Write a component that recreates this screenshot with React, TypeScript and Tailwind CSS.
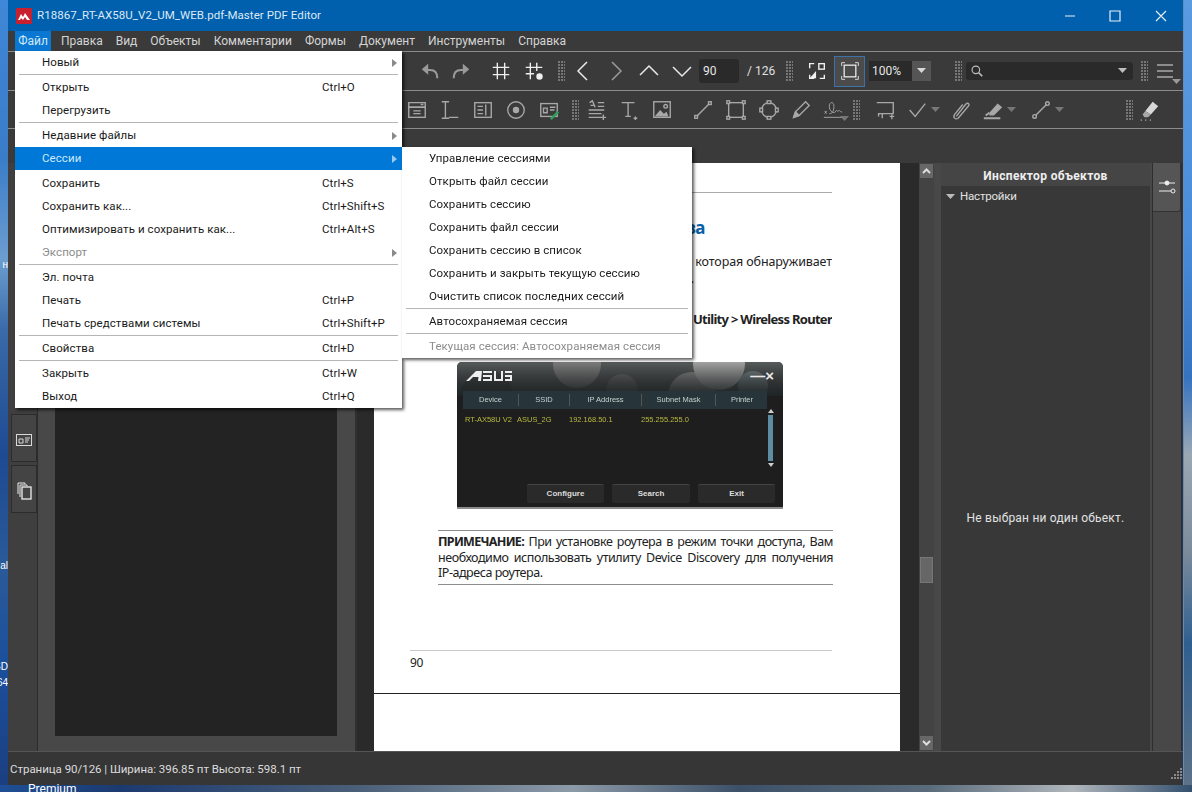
const ui = "font-['Roboto','Noto_Sans',sans-serif]"

type Item = { t?: string; k?: string; sub?: boolean; off?: boolean; on?: boolean; sep?: boolean }

const fileMenu: Item[] = [
  { t: 'Новый', sub: true },
  { sep: true },
  { t: 'Открыть', k: 'Ctrl+O' },
  { t: 'Перегрузить' },
  { sep: true },
  { t: 'Недавние файлы', sub: true },
  { t: 'Сессии', sub: true, on: true },
  { sep: true, off: true },
  { t: 'Сохранить', k: 'Ctrl+S' },
  { t: 'Сохранить как...', k: 'Ctrl+Shift+S' },
  { t: 'Оптимизировать и сохранить как...', k: 'Ctrl+Alt+S' },
  { t: 'Экспорт', sub: true, off: true },
  { sep: true },
  { t: 'Эл. почта' },
  { t: 'Печать', k: 'Ctrl+P' },
  { t: 'Печать средствами системы', k: 'Ctrl+Shift+P' },
  { sep: true },
  { t: 'Свойства', k: 'Ctrl+D' },
  { sep: true },
  { t: 'Закрыть', k: 'Ctrl+W' },
  { t: 'Выход', k: 'Ctrl+Q' },
]

const sessionMenu: Item[] = [
  { t: 'Управление сессиями' },
  { t: 'Открыть файл сессии' },
  { t: 'Сохранить сессию' },
  { t: 'Сохранить файл сессии' },
  { t: 'Сохранить сессию в список' },
  { t: 'Сохранить и закрыть текущую сессию' },
  { t: 'Очистить список последних сессий' },
  { sep: true },
  { t: 'Автосохраняемая сессия' },
  { sep: true },
  { t: 'Текущая сессия: Автосохраняемая сессия', off: true },
]

const menus = ['Правка', 'Вид', 'Объекты', 'Комментарии', 'Формы', 'Документ', 'Инструменты', 'Справка']

// small svg wrapper, everything is drawn on a 24 grid
const Ic = ({ c = '', s = 24, children }: { c?: string; s?: number; children: React.ReactNode }) => (
  <svg width={s} height={s} viewBox="0 0 24 24" fill="none" stroke="currentColor" strokeWidth="1.5" className={`shrink-0 ${c}`}>
    {children}
  </svg>
)

const Grip = ({ c = '' }: { c?: string }) => (
  <svg width="7" height="20" viewBox="0 0 7 20" className={`shrink-0 ${c}`} fill="#777">
    {[0, 3, 6, 9, 12, 15, 18].map((y) => (
      <g key={y}>
        <rect x="0" y={y} width="2" height="2" />
        <rect x="3" y={y} width="2" height="2" />
        <rect x="6" y={y} width="1" height="2" />
      </g>
    ))}
  </svg>
)

const Caret = ({ c = '' }: { c?: string }) => (
  <svg width="9" height="6" viewBox="0 0 9 6" className={`shrink-0 ${c}`} fill="currentColor">
    <path d="M0 0h9L4.5 5z" />
  </svg>
)

const Menu = ({ items, arrow }: { items: Item[]; arrow?: boolean }) => (
  <div className={`${ui} text-[11.500px] tracking-[0.08px]`}>
    {items.map((m, i) =>
      m.sep ? (
        <div key={i} className="h-[2px] px-1">
          {!m.off && <div className="h-px bg-[#b5b5b5]" />}
        </div>
      ) : (
        <div
          key={i}
          className={`h-[23px] flex items-center pl-[27px] ${
            m.on ? 'bg-[#0078d7] text-[#cfe8fb]' : m.off ? 'text-[#8c8c8c]' : 'text-[#1a1a1a]'
          }`}
        >
          <span className={arrow ? 'w-[280px] shrink-0' : ''}>{m.t}</span>
          {arrow && <span className="w-[72px] shrink-0 whitespace-nowrap">{m.k}</span>}
          {m.sub && (
            <svg width="5" height="8" viewBox="0 0 5 8" className={`-ml-[2px] ${m.on ? 'text-[#9cc9ee]' : 'text-[#8a8a8a]'}`} fill="currentColor">
              <path d="M0 0l5 4-5 4z" />
            </svg>
          )}
        </div>
      ),
    )}
  </div>
)

const Toolbar1 = () => (
  <div className="h-[39px] flex items-center border-t border-[#8c8c8c] text-[#9a9a9a] pl-[403px] shrink-0">
    <Ic c="ml-[8px]" s={22}><path d="M20 20c0-6-3-9-8-9H8" strokeWidth="2.200" /><path d="M3 10l7-6v12z" fill="currentColor" stroke="none" /></Ic>
    <Ic c="ml-[9px]" s={22}><path d="M4 20c0-6 3-9 8-9h4" strokeWidth="2.200" /><path d="M21 10l-7-6v12z" fill="currentColor" stroke="none" /></Ic>
    <Ic c="ml-[18px] text-[#f0f0f0]" s={22}><path d="M8 3v18M16 3v18M3 8h18M3 16h18" /></Ic>
    <Ic c="ml-[11px] text-[#f0f0f0]" s={22}>
      <path d="M8 3v18M15 3v9M3 8h18M3 15h9" />
      <circle cx="18" cy="18" r="3.500" fill="#f0f0f0" stroke="none" />
    </Ic>
    <Grip c="ml-[13px]" />
    <Ic c="ml-[6px] text-[#e8e8e8]" s={24}><path d="M16 3L7 12l9 9" /></Ic>
    <Ic c="ml-[9px]" s={24}><path d="M8 3l9 9-9 9" /></Ic>
    <Ic c="ml-[9px] text-[#e8e8e8]" s={24}><path d="M3 16l9-9 9 9" /></Ic>
    <Ic c="ml-[9px] text-[#e8e8e8]" s={24}><path d="M3 8l9 9 9-9" /></Ic>
    <div className={`ml-[5px] w-[40px] h-[24px] rounded-[3px] bg-[#2a2a2a] text-[#e6e6e6] text-[12px] flex items-center pl-[4px] ${ui}`}>90</div>
    <span className={`ml-[8px] w-[30px] text-[12px] text-[#e0e0e0] ${ui}`}>/ 126</span>
    <Grip c="ml-[9px]" />
    <Ic c="ml-[13px] text-[#f0f0f0]" s={22}>
      <path d="M9 4H4v5M4 16v4h5M15 20h5v-4" />
      <rect x="14" y="4" width="6" height="6" />
      <path d="M11 12L4 20h7z" fill="#f0f0f0" stroke="none" />
    </Ic>
    <div className="ml-[6px] w-[31px] h-[31px] bg-[#4b4b4b] border border-[#3d72a8] flex items-center justify-center text-[#f0f0f0]">
      <Ic s={20}>
        <rect x="5" y="5" width="14" height="14" />
        <path d="M2 6V2h4M18 2h4v4M22 18v4h-4M6 22H2v-4" strokeWidth="1" />
      </Ic>
    </div>
    <div className={`ml-[4px] w-[43px] h-[20px] bg-[#2a2a2a] text-[#e6e6e6] text-[12px] flex items-center pl-[3px] ${ui}`}>100%</div>
    <div className="w-[19px] h-[20px] bg-[#555] flex items-center justify-center text-[#d8d8d8]"><Caret /></div>
    <Grip c="ml-[24px]" />
    <div className="ml-[4px] w-[167px] h-[18px] rounded-[3px] bg-[#2a2a2a] flex items-center justify-between pl-[4px] pr-[6px] text-[#bdbdbd]">
      <Ic s={14}><circle cx="10" cy="10" r="6.500" strokeWidth="2" /><path d="M15 15l6 6" strokeWidth="3" /></Ic>
      <Caret />
    </div>
    <Grip c="ml-[8px]" />
    <div className="ml-[9px] relative text-[#e0e0e0]">
      <svg width="16" height="14" viewBox="0 0 16 14" className="block" stroke="currentColor"><path d="M0 1h16M0 7h16M0 13h16" /></svg>
      <Caret c="absolute left-[15px] top-[15px] text-[#999]" />
    </div>
  </div>
)

const Toolbar2 = () => (
  <div className="h-[38px] flex items-center border-t border-[#8c8c8c] text-[#a8a8a8] pl-[398px] shrink-0">
    <Ic s={22}><rect x="3" y="9" width="18" height="11" /><path d="M3 4h18v5H3zM8 13h8M8 16h8M16 6h3" /></Ic>
    <Ic c="ml-[11px]" s={22}><path d="M3 3h8M7 3v18M3 21h8M11 20h10" /></Ic>
    <Ic c="ml-[11px]" s={22}><rect x="3" y="4" width="18" height="16" /><path d="M6 8h6M6 12h6M6 16h6M15 6v12" /></Ic>
    <Ic c="ml-[11px]" s={22}><circle cx="12" cy="12" r="9" /><circle cx="12" cy="12" r="3.500" fill="currentColor" stroke="none" /></Ic>
    <Ic c="ml-[11px]" s={22}>
      <rect x="3" y="5" width="18" height="14" />
      <path d="M6 10h4v5H6zM13 9h6M13 12h5" />
      <path d="M13 21l8-8 2 2-8 8z" fill="#2f9e5a" stroke="none" />
    </Ic>
    <Grip c="ml-[12px]" />
    <Ic c="ml-[6px]" s={22}><path d="M5 4l3-2 3 7M6 7h4M14 4h7M14 8h7M4 12h17M4 16h14M4 20h14M20 17v6M17 20h6" /></Ic>
    <Ic c="ml-[11px]" s={22}><path d="M4 4h14M11 4v15M8 19h6M19 19v4M17 21h4" /></Ic>
    <Ic c="ml-[11px]" s={22}>
      <rect x="3" y="3" width="18" height="17" />
      <path d="M4 19l6-7 4 4 3-2 2 5z" fill="currentColor" stroke="none" />
      <circle cx="16" cy="8" r="2" />
    </Ic>
    <Ic c="ml-[19px]" s={22}><path d="M6 18L18 6" /><rect x="3" y="18" width="3" height="3" /><rect x="18" y="3" width="3" height="3" /></Ic>
    <Ic c="ml-[11px]" s={22}>
      <rect x="4" y="4" width="16" height="16" />
      <rect x="2" y="2" width="3" height="3" fill="#3a3a3a" /><rect x="19" y="2" width="3" height="3" fill="#3a3a3a" />
      <rect x="2" y="19" width="3" height="3" fill="#3a3a3a" /><rect x="19" y="19" width="3" height="3" fill="#3a3a3a" />
    </Ic>
    <Ic c="ml-[11px]" s={22}>
      <circle cx="12" cy="12" r="8" />
      <rect x="10" y="2" width="4" height="3" fill="#3a3a3a" /><rect x="10" y="19" width="4" height="3" fill="#3a3a3a" />
      <rect x="2" y="10" width="3" height="4" fill="#3a3a3a" /><rect x="19" y="10" width="3" height="4" fill="#3a3a3a" />
    </Ic>
    <Ic c="ml-[10px]" s={22}><path d="M4 20l2-6L17 3l4 4-11 11z" /><path d="M4 20l2-6 4 4z" fill="currentColor" /></Ic>
    <Ic c="ml-[10px]" s={22}><path d="M2 20h20M3 13l2 3M5 13l-2 3M8 16c4 0 5-4 5-8 0-6-5-5-5 0 0 6 6 9 7 5 1-2 2 2 3 0s2 2 4 1" strokeWidth="1" /></Ic>
    <Caret c="-ml-[4px] mt-[18px] text-[#777]" />
    <Grip c="ml-[4px]" />
    <Ic c="ml-[14px]" s={22}><path d="M3 4h18v12H9v5M9 16H5v3M17 19h5M19.500 17v5" /></Ic>
    <Ic c="ml-[10px]" s={22}><path d="M4 12l6 7L21 5" /></Ic>
    <Caret c="ml-[3px] text-[#777]" />
    <Ic c="ml-[9px]" s={22}><path d="M8 19L18 6c3-3 5 0 3 2L10 21c-3 2-6-1-4-4L15 6" /></Ic>
    <Ic c="ml-[11px]" s={22}><path d="M8 15L17 5l5 4-9 9H8z" fill="currentColor" stroke="none" /><path d="M2 21h18M4 18l4-3" strokeWidth="2" /></Ic>
    <Caret c="ml-[3px] text-[#777]" />
    <Ic c="ml-[14px]" s={22}><path d="M6 18L18 6" /><circle cx="5" cy="19" r="2" /><circle cx="19" cy="5" r="2" /></Ic>
    <Caret c="ml-[3px] text-[#777]" />
    <Grip c="ml-[62px]" />
    <Ic c="ml-[5px]" s={22}><path d="M8 13L16 3l6 5-8 9z" fill="#d8d8d8" stroke="none" /><path d="M8 13l6 4-3 3H7l-2-3z" fill="currentColor" stroke="none" /><path d="M3 23h1M8 23h1M13 23h1" strokeWidth="2" /></Ic>
  </div>
)

const AsusShot = () => (
  <div className="ml-[83px] mt-[34px] relative w-[326px] h-[147px] shrink-0 overflow-hidden rounded-t-[5px] bg-[#1e1e1e] border-b-2 border-[#8c8c8c] font-['Liberation_Sans',sans-serif] text-[7.500px] text-[#c8c8c8] blur-[0.25px]">
    {/* bokeh behind the title of the little window */}
    <svg className="absolute left-0 top-0" width="326" height="34">
      <defs>
        <linearGradient id="fade" x1="0" y1="0" x2="0" y2="1">
          <stop offset="0" stopColor="#000" stopOpacity="0" />
          <stop offset="1" stopColor="#1c2224" stopOpacity="0.95" />
        </linearGradient>
      </defs>
      <rect width="326" height="34" fill="#565b5c" />
      <circle cx="120" cy="2" r="24" fill="#7c7c7c" />
      <circle cx="165" cy="28" r="16" fill="#6c6e6e" />
      <circle cx="235" cy="34" r="24" fill="#8a8a8a" />
      <circle cx="262" cy="2" r="26" fill="#a2a2a2" />
      <circle cx="296" cy="24" r="15" fill="#7a8588" />
      <circle cx="30" cy="34" r="26" fill="#4a4f50" />
      <rect width="326" height="34" fill="url(#fade)" />
    </svg>
    <div className="relative h-[27px] flex items-center justify-between px-[9px]">
      <svg width="46" height="10" viewBox="0 0 46 10" fill="#eee">
        <path d="M0 10L10 0h6l-1 10h-3l.5-4H7l-4 4zM17 0h9v2h-9zM17 4h9v6h-9V8h7V6h-7zM28 0h2v8h5V0h2v10h-9zM39 0h7v2h-7zM39 4h7v6h-7V8h5V6h-5z" />
      </svg>
      <span className="text-[15px] leading-none font-bold text-[#e8e8e8]">—×</span>
    </div>
    <div className="relative h-[18px] mt-[2px] ml-[6px] mr-[16px] grid grid-cols-[55px_51px_72px_74px_53px] items-center text-center bg-[#27353a] text-[#c8d0d0]">
      <span>Device</span>
      <span className="border-l border-[#555]">SSID</span>
      <span className="border-l border-[#555]">IP Address</span>
      <span className="border-l border-[#555]">Subnet Mask</span>
      <span className="border-l border-[#555]">Printer</span>
    </div>
    <div className="relative mt-[5px] ml-[8px] flex text-[#b9b840]">
      <span className="w-[52px]">RT-AX58U V2</span>
      <span className="w-[52px]">ASUS_2G</span>
      <span className="w-[72px]">192.168.50.1</span>
      <span>255.255.255.0</span>
    </div>
    <div className="absolute right-[9px] top-[47px] w-[7px] h-[58px] flex flex-col items-center text-[#cfcfcf]">
      <svg width="6" height="4" viewBox="0 0 6 4" fill="currentColor"><path d="M3 0l3 4H0z" /></svg>
      <div className="my-[2px] w-[5px] flex-1 bg-[#5e8ca0]" />
      <svg width="6" height="4" viewBox="0 0 6 4" fill="currentColor"><path d="M3 4L0 0h6z" /></svg>
    </div>
    <div className="absolute left-[70px] bottom-[4px] flex gap-[8px] text-[8px] font-bold text-[#ddd]">
      <div className="w-[77px] h-[19px] rounded-[2px] bg-[#2a2a2a] border-t border-[#444] flex items-center justify-center">Configure</div>
      <div className="w-[78px] h-[19px] rounded-[2px] bg-[#2a2a2a] border-t border-[#444] flex items-center justify-center">Search</div>
      <div className="w-[77px] h-[19px] rounded-[2px] bg-[#2a2a2a] border-t border-[#444] flex items-center justify-center">Exit</div>
    </div>
  </div>
)

const Page = () => (
  <div className="w-[526px] bg-white flex flex-col font-['Noto_Sans',sans-serif] text-[#222] shrink-0">
    <div className="ml-[36px] mr-[68px] mt-[29px] h-px bg-[#aaa] shrink-0" />
    <div className="ml-[36px] mr-[195px] mt-[25px] h-[20px] text-right text-[17px] leading-[20px] font-bold text-[#0b5fa5] tracking-[-0.5px] whitespace-nowrap">Обнаружение устройства</div>
    <div className="ml-[36px] mr-[68px] mt-[16px] h-[16px] text-right text-[12.500px] leading-[16px] tracking-[-0.1px] whitespace-nowrap overflow-hidden">утилита для ASUS WLAN роутеров, которая обнаруживает</div>
    <div className="ml-[36px] mr-[206px] mt-[1px] h-[16px] text-right text-[12.500px] leading-[16px] whitespace-nowrap">роутер.</div>
    <div className="ml-[36px] mr-[68px] mt-[23px] h-[18px] text-right text-[13px] leading-[18px] font-bold tracking-[-0.7px] whitespace-nowrap overflow-hidden">Device Discovery Utility &gt; Wireless Router</div>
    <AsusShot />
    <div className="ml-[64px] mr-[67px] mt-[21px] border-y border-[#8e8e8e] pt-[3px] pb-[3.500px] text-[12.500px] leading-[15.500px] tracking-[-0.45px] shrink-0">
      <p className="flex justify-between"><b className="font-bold tracking-[-0.7px]">ПРИМЕЧАНИЕ:</b><span>При</span><span>установке</span><span>роутера</span><span>в</span><span>режим</span><span>точки</span><span>доступа,</span><span>Вам</span></p>
      <p className="flex justify-between"><span>необходимо</span><span>использовать</span><span>утилиту</span><span>Device</span><span>Discovery</span><span>для</span><span>получения</span></p>
      <p>IP-адреса роутера.</p>
    </div>
    <div className="ml-[36px] mr-[68px] mt-[65px] h-px bg-[#c8c8c8] shrink-0" />
    <div className="ml-[36px] mt-[4px] h-[16px] text-[12px] leading-[16px] tracking-[-0.4px]">90</div>
    <div className="mt-[22px] h-px bg-[#222] shrink-0" />
  </div>
)

export default function App() {
  return (
    <div className={`relative w-[1192px] h-[792px] overflow-hidden flex flex-col ${ui}`}>
      <div className="flex h-[785px] shrink-0">
        {/* desktop peeking out on the left */}
        <div className="relative w-[8px] bg-[linear-gradient(180deg,#3f87d8_0%,#3a7cc8_20%,#6c9ed0_33%,#3a6aa8_42%,#1d4a92_58%,#2a5a98_72%,#1b4f9c_85%,#1b3f80_100%)] text-[10px] leading-none text-white overflow-hidden font-['Liberation_Sans',sans-serif]">
          <span className="absolute right-0 top-[260px]">н</span>
          <span className="absolute right-0 top-[561px]">al</span>
          <span className="absolute right-0 top-[662px]">SD</span>
          <span className="absolute right-0 top-[678px]">64</span>
        </div>

        <div className="w-[1176px] bg-[#353535] flex flex-col border-r border-[#5d8fbd]">
          {/* title bar */}
          <div className="h-[31px] bg-[#0060ae] flex items-center shrink-0 text-[#dce9f4]">
            <svg width="16" height="16" viewBox="0 0 16 16" className="ml-[8px]">
              <rect width="16" height="16" rx="1" fill="#c8202e" />
              <path d="M2 12l3-6 2 3 2-4 5 7h-3L9 9l-2 3-2-2-1 2z" fill="#fff" />
            </svg>
            <span className="ml-[5px] text-[11.500px] tracking-[0.05px]">R18867_RT-AX58U_V2_UM_WEB.pdf-Master PDF Editor</span>
            <svg width="102" height="14" viewBox="0 0 102 14" className="ml-auto mr-[16px]" fill="none" stroke="#e6f0f8" strokeWidth="1.2">
              <path d="M0 7h10M45 2h10v10H45zM91 2l10 10M101 2L91 12" />
            </svg>
          </div>

          {/* menu bar */}
          <div className="h-[20px] bg-[#3a3a3a] flex items-center text-[12px] text-[#d4d4d4] shrink-0">
            <div className="ml-[7px] w-[36px] h-[20px] bg-[#0a78d2] text-[#cfe8fb] flex items-center justify-center">Файл</div>
            <div className="flex gap-[13px] ml-[10px]">
              {menus.map((m) => <span key={m}>{m}</span>)}
            </div>
          </div>

          <div className="bg-[#3a3a3a]">
            <Toolbar1 />
            <Toolbar2 />
            <div className="h-[35px] border-t border-[#8c8c8c]" />
          </div>

          {/* main area */}
          <div className="flex-1 min-h-0 flex">
            {/* left tabs */}
            <div className="w-[30px] pl-[3px] shrink-0 flex flex-col items-stretch border-r border-[#2b2b2b] bg-[#3f3f3f] pt-[251px] gap-[3px]">
              <div className="h-[48px] pt-[4px] border border-[#2c2c2c] bg-[#444] flex items-center justify-center text-[#d8d8d8]">
                <svg width="16" height="12" viewBox="0 0 16 12" fill="none" stroke="currentColor"><rect x=".5" y=".5" width="15" height="11" /><path d="M3 5h4v4H3zM9 4h5M9 6h4M9 8h3" /></svg>
              </div>
              <div className="h-[48px] pt-[4px] border border-[#2c2c2c] bg-[#444] flex items-center justify-center text-[#eee]">
                <svg width="15" height="18" viewBox="0 0 15 18" fill="none" stroke="currentColor"><path d="M1 1h7v1M1 1v11M3 3h7v1M3 3v12" /><rect x="5" y="5" width="9" height="12" fill="#444" strokeWidth="1.3" /></svg>
              </div>
            </div>

            {/* thumbnails panel */}
            <div className="w-[317px] shrink-0 flex bg-[#484848] pb-[15px]">
              <div className="w-[17px]" />
              <div className="w-[282px] bg-[#232323]" />
              <div className="w-[18px]" />
            </div>

            {/* splitter */}
            <div className="w-[2px] bg-[#303030]" />

            {/* document */}
            <div className="w-[562px] shrink-0 bg-[#2a2a2a] flex pl-[17px]">
              <Page />
            </div>

            {/* scrollbar */}
            <div className="w-[15px] shrink-0 bg-[#434343] flex flex-col items-center py-[1px] text-[#ddd]">
              <div className="w-[13px] h-[14px] bg-[#676767] flex items-center justify-center">
                <svg width="9" height="6" viewBox="0 0 9 6" fill="none" stroke="currentColor" strokeWidth="2"><path d="M1 5l3.500-3.500L8 5" /></svg>
              </div>
              <div className="mt-[379px] w-[13px] h-[26px] bg-[#666] border border-[#777]" />
              <div className="mt-auto w-[13px] h-[14px] bg-[#676767] flex items-center justify-center">
                <svg width="9" height="6" viewBox="0 0 9 6" fill="none" stroke="currentColor" strokeWidth="2"><path d="M1 1l3.500 3.500L8 1" /></svg>
              </div>
            </div>

            {/* inspector */}
            <div className="w-[219px] shrink-0 bg-[#484848] flex flex-col pl-[7px] pr-[2px] border-r border-[#2e2e2e]">
              <div className="h-[23px] pt-[3px] bg-[#454545] shrink-0 flex items-center justify-center text-[12px] font-bold text-[#eeeeee] tracking-[0.35px]">Инспектор объектов</div>
              <div className="flex-1 bg-[#383838] flex flex-col text-[12px] text-[#e2e2e2]">
                <div className="h-[22px] flex items-center pl-[5px] gap-[5px]">
                  <Caret c="text-[#bbb]" />
                  <span className="text-[11.500px] -tracking-[0.2px]">Настройки</span>
                </div>
                <div className="flex-1 flex items-center justify-center pt-[77px] tracking-[0.2px]">Не выбран ни один обьект.</div>
              </div>
            </div>

            {/* right tab */}
            <div className="w-[29px] shrink-0 bg-[#484848] border-r border-[#2e2e2e]">
              <div className="h-[49px] bg-[#555] border-b border-r border-[#333] rounded-br-[3px] flex items-center justify-center text-[#eee]">
                <svg width="18" height="14" viewBox="0 0 18 14" fill="none" stroke="currentColor">
                  <path d="M1 3h16M1 11h12" />
                  <circle cx="9" cy="3" r="2" fill="currentColor" />
                  <circle cx="15" cy="11" r="2" />
                </svg>
              </div>
            </div>
            <div className="flex-1" />
          </div>

          {/* status bar */}
          <div className="h-[34px] bg-[#363636] border-t border-[#555] shrink-0 flex items-center pl-[2px] pb-[3px] text-[11.500px] -tracking-[0.03px] text-[#dcdcdc]">
            <span className="mt-[6px]">Страница 90/126 | Ширина: 396.85 пт Высота: 598.1 пт</span>
            <svg width="12" height="12" viewBox="0 0 12 12" fill="#8a8a8a" className="ml-auto mt-[14px]">
              <path d="M9 0h2v2H9zM6 3h2v2H6zM9 3h2v2H9zM3 6h2v2H3zM6 6h2v2H6zM9 6h2v2H9zM0 9h2v2H0zM3 9h2v2H3zM6 9h2v2H6zM9 9h2v2H9z" />
            </svg>
          </div>
        </div>

        {/* desktop peeking out on the right */}
        <div className="w-[8px] bg-[linear-gradient(180deg,#5b9be0_0%,#4a8dda_30%,#3573c0_48%,#9aa8b4_58%,#7d8c9c_70%,#2f5f90_82%,#5c7288_100%)]" />
      </div>

      {/* bottom strip of the wallpaper */}
      <div className="relative h-[7px] bg-[linear-gradient(90deg,#1e4f96_0%,#1c3a70_10%,#4a5f78_30%,#8c9aa8_48%,#3c5068_62%,#5a6c7c_78%,#b0b6bc_90%,#33506e_100%)]">
        <span className="absolute left-[28px] top-[-2px] text-[12px] leading-none text-white">Premium</span>
      </div>

      {/* open file menu */}
      <div className="absolute left-[15px] top-[51px] w-[387px] h-[357px] bg-white shadow-[2px_2px_3px_rgba(0,0,0,0.65)]">
        <Menu items={fileMenu} arrow />
      </div>

      {/* sessions submenu */}
      <div className="absolute left-[402px] top-[147px] w-[290px] h-[211px] bg-white shadow-[2px_2px_3px_rgba(0,0,0,0.65)]">
        <Menu items={sessionMenu} />
      </div>
    </div>
  )
}
